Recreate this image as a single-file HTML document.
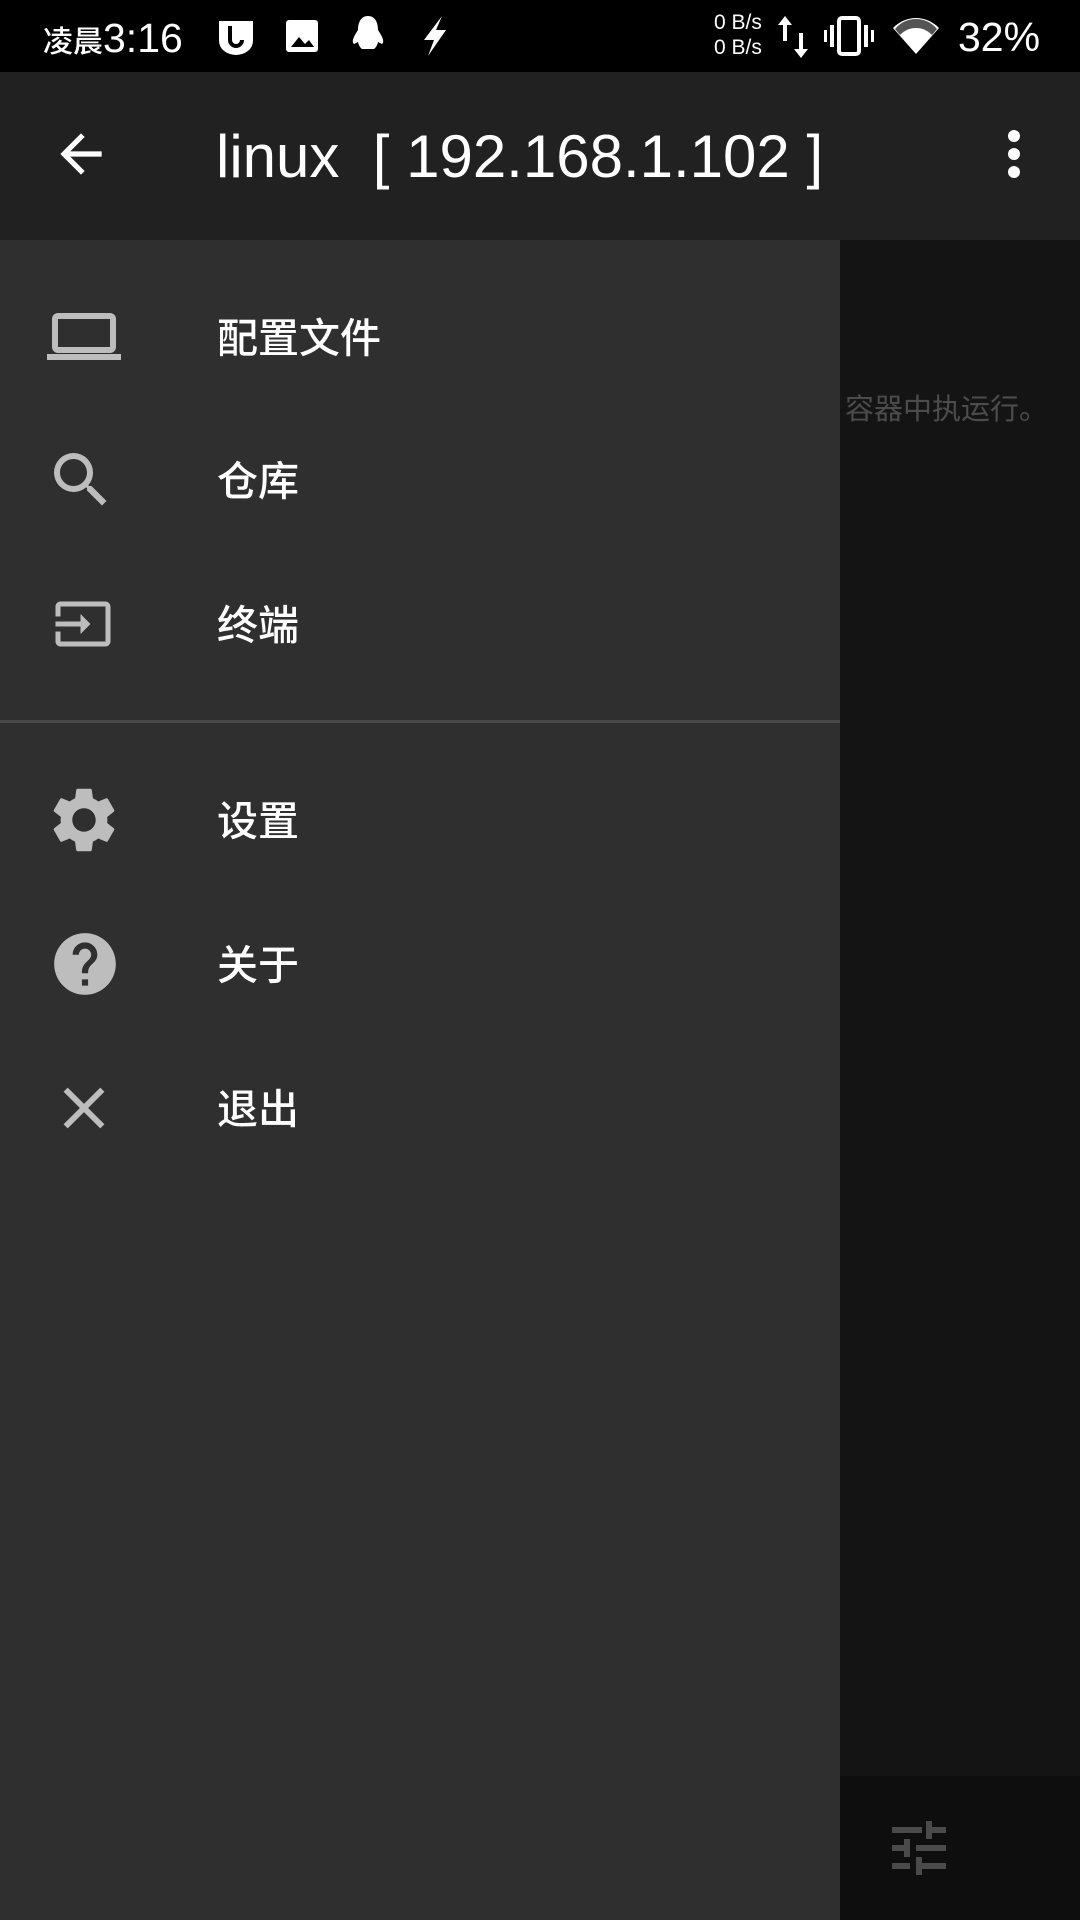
<!DOCTYPE html>
<html><head><meta charset="utf-8"><style>
*{margin:0;padding:0;box-sizing:border-box}
body{width:1080px;height:1920px;background:#141414;position:relative;overflow:hidden;font-family:"Liberation Sans","Noto Sans CJK SC",sans-serif}
.sb{position:absolute;left:0;top:0;width:1080px;height:72px;background:#000;color:#fff}
.tb{position:absolute;left:0;top:72px;width:1080px;height:168px;background:#212121;color:#fff}
.dr{position:absolute;left:0;top:240px;width:840px;height:1680px;background:#2f2f2f}
.item{position:absolute;left:0;width:840px;height:100px}
.item .t{position:absolute;left:217px;top:50%;transform:translateY(-54%);font-size:41px;color:#fff;font-family:"Noto Sans CJK SC",sans-serif;font-weight:500}
.item svg{position:absolute;top:50%;transform:translateY(-50%)}
</style></head><body>
<div class="sb">
<div style="position:absolute;left:43px;top:15px;font-size:41px;font-weight:500"><span style="font-size:30px;font-family:'Noto Sans CJK SC',sans-serif">凌晨</span>3:16</div>
<svg style="position:absolute;left:216px;top:18px" width="40" height="38" viewBox="0 0 40 38"><path d="M3 3h34v20a17 14 0 0 1-34 0z" fill="#fff"/><path d="M14 8v14a6 6 0 0 0 12 0" stroke="#000" stroke-width="4" fill="none"/></svg>
<svg style="position:absolute;left:284px;top:18px" width="36" height="36"><rect x="2" y="2" width="32" height="32" rx="3" fill="#fff"/><path d="M7 29l8-10 6 7 4-4 5 7z" fill="#000"/></svg>
<svg style="position:absolute;left:348px;top:14px" width="40" height="42"><path d="M20 2c-8 0-10 8-10 14-4 6-7 12-4 14l4-2c1 5 4 7 4 7h12s3-2 4-7l4 2c3-2 0-8-4-14 0-6-2-14-10-14z" fill="#fff"/></svg>
<svg style="position:absolute;left:418px;top:14px" width="32" height="44"><path d="M24 2L6 26h10L10 42 28 16H18z" fill="#fff"/></svg>
<div style="position:absolute;left:714px;top:10px;font-size:21px;line-height:25px">0 B/s<br>0 B/s</div>
<svg style="position:absolute;left:776px;top:14px" width="34" height="46"><path d="M9 2l-7 9h5v16h4V11h5z M25 44l7-9h-5V19h-4v16h-5z" fill="#fff"/></svg>
<svg style="position:absolute;left:824px;top:16px" width="50" height="40"><rect x="15" y="2" width="20" height="36" rx="3" fill="none" stroke="#fff" stroke-width="4"/><rect x="6" y="9" width="4" height="22" fill="#fff"/><rect x="40" y="9" width="4" height="22" fill="#fff"/><rect x="0" y="14" width="3" height="12" fill="#fff"/><rect x="47" y="14" width="3" height="12" fill="#fff"/></svg>
<svg style="position:absolute;left:892px;top:16px" width="48" height="40"><path d="M24 38L1 12C8 5 16 2 24 2s16 3 23 10z" fill="#fff"/><path d="M3 13C9 6 16 3 24 3s15 3 21 10l-5 6C35 14 30 12 24 12s-11 2-16 7z" fill="#555"/></svg>
<div style="position:absolute;left:958px;top:14px;font-size:41px;font-weight:500">32%</div>
</div>
<div class="tb">
<svg style="position:absolute;left:50px;top:51px" width="62" height="62" viewBox="0 0 24 24"><path d="M20 11H7.83l5.59-5.59L12 4l-8 8 8 8 1.41-1.41L7.83 13H20z" fill="#fff"/></svg>
<div style="position:absolute;left:216px;top:50px;font-size:60px;font-weight:500;white-space:pre">linux  [ 192.168.1.102 ]</div>
<svg style="position:absolute;left:1000px;top:54px" width="28" height="56"><circle cx="14" cy="10" r="6" fill="#fff"/><circle cx="14" cy="28" r="6" fill="#fff"/><circle cx="14" cy="46" r="6" fill="#fff"/></svg>
</div>
<div style="position:absolute;left:845px;top:386px;font-size:29px;color:#4c4c4c;font-family:'Noto Sans CJK SC',sans-serif">容器中执运行。</div>
<div style="position:absolute;left:840px;top:1776px;width:240px;height:144px;background:#0e0e0e"></div>
<svg style="position:absolute;left:890px;top:1821px" width="56" height="56"><g fill="#4a4a4a"><rect x="2" y="6" width="30" height="6"/><rect x="38" y="6" width="18" height="6"/><rect x="36" y="0" width="6" height="18"/><rect x="2" y="24" width="18" height="6"/><rect x="26" y="24" width="30" height="6"/><rect x="14" y="18" width="6" height="18"/><rect x="2" y="42" width="18" height="6"/><rect x="26" y="42" width="30" height="6"/><rect x="26" y="36" width="6" height="18"/></g></svg>
<div class="dr">
<div class="item" style="top:47px"><svg style="left:47px" width="74" height="50" viewBox="0 0 74 50"><rect x="8" y="4" width="58" height="34" rx="3" fill="none" stroke="#bdbdbd" stroke-width="6"/><rect x="0" y="42" width="74" height="6" fill="#bdbdbd"/></svg><div class="t">配置文件</div></div>
<div class="item" style="top:190px"><svg style="left:45px" width="72" height="72" viewBox="0 0 24 24"><path d="M15.5 14h-.79l-.28-.27A6.47 6.47 0 0016 9.5 6.5 6.5 0 109.5 16c1.61 0 3.09-.59 4.23-1.57l.27.28v.79l5 4.99L20.49 19l-4.99-5zm-6 0C7.01 14 5 11.99 5 9.5S7.01 5 9.5 5 14 7.01 14 9.5 11.99 14 9.5 14z" fill="#bdbdbd"/></svg><div class="t">仓库</div></div>
<div class="item" style="top:334px"><svg style="left:53px" width="60" height="60" viewBox="0 0 24 24"><path d="M21 3.01H3c-1.1 0-2 .9-2 2V9h2V4.99h18v14.03H3V15H1v4.01c0 1.1.9 1.98 2 1.98h18c1.1 0 2-.88 2-1.98v-14a2 2 0 00-2-1.99zM11 16l4-4-4-4v3H1v2h10v3z" fill="#bdbdbd"/></svg><div class="t">终端</div></div>
<div style="position:absolute;left:0;top:480px;width:840px;height:3px;background:#474747"></div>
<div class="item" style="top:530px"><svg style="left:45px" width="78" height="78" viewBox="0 0 24 24"><path d="M19.14 12.94c.04-.3.06-.61.06-.94 0-.32-.02-.64-.07-.94l2.03-1.58a.49.49 0 00.12-.61l-1.920-3.32a.488.488 0 00-.59-.22l-2.39.96c-.5-.38-1.03-.7-1.62-.94l-.36-2.54a.484.484 0 00-.48-.41h-3.84c-.24 0-.43.17-.47.41l-.36 2.54c-.59.24-1.13.57-1.62.94l-2.39-.96c-.22-.08-.47 0-.59.22L2.74 8.87c-.12.21-.08.47.12.61l2.03 1.58c-.05.3-.09.63-.09.94s.02.64.07.94l-2.03 1.58a.49.49 0 00-.12.61l1.92 3.32c.12.22.37.29.59.22l2.39-.96c.5.38 1.03.7 1.62.94l.36 2.54c.05.24.24.41.48.41h3.840c.24 0 .44-.17.47-.41l.36-2.54c.59-.24 1.13-.56 1.62-.94l2.39.96c.22.08.47 0 .59-.22l1.92-3.32c.12-.22.07-.47-.12-.61l-2.01-1.58zM12 15.6c-1.98 0-3.6-1.62-3.6-3.6s1.62-3.6 3.6-3.6 3.6 1.62 3.6 3.6-1.62 3.6-3.6 3.6z" fill="#bdbdbd"/></svg><div class="t">设置</div></div>
<div class="item" style="top:674px"><svg style="left:48px" width="74" height="74" viewBox="0 0 24 24"><path d="M12 2C6.48 2 2 6.48 2 12s4.48 10 10 10 10-4.48 10-10S17.52 2 12 2zm1 17h-2v-2h2v2zm2.07-7.75l-.9.92C13.45 12.9 13 13.5 13 15h-2v-.5c0-1.1.45-2.1 1.17-2.83l1.24-1.26c.37-.36.59-.86.59-1.41 0-1.1-.9-2-2-2s-2 .9-2 2H8c0-2.21 1.79-4 4-4s4 1.79 4 4c0 .88-.36 1.68-.93 2.25z" fill="#bdbdbd"/></svg><div class="t">关于</div></div>
<div class="item" style="top:818px"><svg style="left:49px" width="70" height="70" viewBox="0 0 24 24"><path d="M19 6.41L17.59 5 12 10.59 6.41 5 5 6.41 10.59 12 5 17.59 6.41 19 12 13.41 17.59 19 19 17.59 13.41 12z" fill="#bdbdbd"/></svg><div class="t">退出</div></div>
</div>
</body></html>
